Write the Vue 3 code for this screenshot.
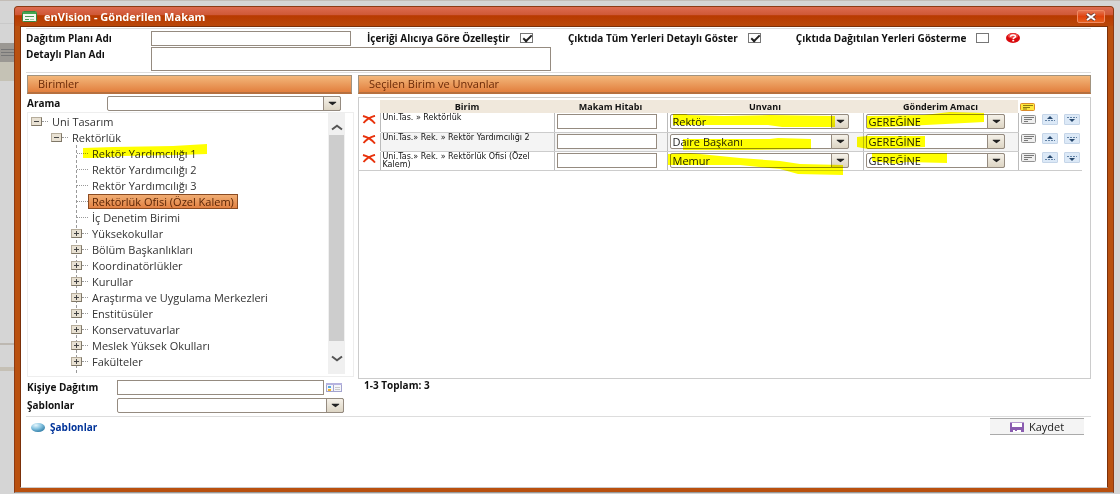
<script setup>
import { ref } from 'vue'

const planName = ref('')
const planDetail = ref('')
const person = ref('')
const options = ref([
  { id: 'customize', label: 'İçeriği Alıcıya Göre Özelleştir', checked: true },
  { id: 'detailed', label: 'Çıktıda Tüm Yerleri Detaylı Göster', checked: true },
  { id: 'hidden', label: 'Çıktıda Dağıtılan Yerleri Gösterme', checked: false },
])

const tree = [
  { label: 'Uni Tasarım', level: 0, sign: '-' },
  { label: 'Rektörlük', level: 1, sign: '-' },
  { label: 'Rektör Yardımcılığı 1', level: 2, mark: '0,4 30,3 90,2 124,0 124,10 95,11 40,12 10,14 0,14' },
  { label: 'Rektör Yardımcılığı 2', level: 2 },
  { label: 'Rektör Yardımcılığı 3', level: 2 },
  { label: 'Rektörlük Ofisi (Özel Kalem)', level: 2, selected: true },
  { label: 'İç Denetim Birimi', level: 2 },
  { label: 'Yüksekokullar', level: 2, sign: '+' },
  { label: 'Bölüm Başkanlıkları', level: 2, sign: '+' },
  { label: 'Koordinatörlükler', level: 2, sign: '+' },
  { label: 'Kurullar', level: 2, sign: '+' },
  { label: 'Araştırma ve Uygulama Merkezleri', level: 2, sign: '+' },
  { label: 'Enstitüsüler', level: 2, sign: '+' },
  { label: 'Konservatuvarlar', level: 2, sign: '+' },
  { label: 'Meslek Yüksek Okulları', level: 2, sign: '+' },
  { label: 'Fakülteler', level: 2, sign: '+' },
]

const rows = ref([
  {
    unit: 'Uni.Tas. » Rektörlük', address: '', title: 'Rektör', purpose: 'GEREĞİNE',
    titleMark: '3,0 16,0 18,1 54,2 100,1 165,2 165,13 112,13 98,11 3,11',
    purposeMark: '1,2 58,1 84,-2 118,-1 118,8 60,11 1,14',
  },
  {
    unit: 'Uni.Tas.» Rek. » Rektör Yardımcılığı 2', address: '', title: 'Daire Başkanı', purpose: 'GEREĞİNE',
    titleMark: '13,5 100,5 108,4 141,5 141,15 70,16 13,16',
    purposeMark: '-9,3 1,2 59,2 59,13 2,15 -9,13',
  },
  {
    unit: 'Uni.Tas.» Rek. » Rektörlük Ofisi (Özel Kalem)', address: '', title: 'Memur', purpose: 'GEREĞİNE',
    titleMark: '-2,1 20,0 70,5 110,8 130,11 173,12 173,22 128,21 110,16 70,12 -2,12',
    purposeMark: '6,0 81,0 81,10 40,9 30,11 6,8',
  },
])
</script>

<template>
  <div class="page">
    <div class="backdrop" aria-hidden="true"></div>
    <section class="window" aria-labelledby="window-title">
      <header class="titlebar">
        <svg class="app-icon" width="15" height="11" viewBox="0 0 15 11">
          <rect x=".5" y=".5" width="14" height="10" rx="1" fill="#f4f8f0" stroke="#36893f" />
          <path d="M1 1h13v2H1z" fill="#45a64f" />
          <path d="M3 5.500h9M3 8.500h4" stroke="#4a9b56" />
          <path d="M8 8.500h4" stroke="#a9c9a5" />
        </svg>
        <h1 id="window-title">enVision - Gönderilen Makam</h1>
        <button class="close" type="button" aria-label="Kapat">
          <svg width="12" height="8" viewBox="0 0 12 8">
            <path d="M2 1l8 6M10 1L2 7" stroke="#6c3b31" stroke-width="3.600" />
            <path d="M2 1l8 6M10 1L2 7" stroke="#fff" stroke-width="2" />
          </svg>
        </button>
      </header>

      <main class="content">
        <div class="plan">
          <label for="plan-name">Dağıtım Planı Adı</label>
          <div class="plan-line">
            <input id="plan-name" v-model="planName" class="box plan-name" type="text">
            <div class="options">
              <label v-for="o in options" :key="o.id" :for="o.id" class="option">
                {{ o.label }}
                <input :id="o.id" v-model="o.checked" type="checkbox">
              </label>
              <button class="bare" type="button" aria-label="Yardım">
                <svg width="14" height="10" viewBox="0 0 14 10">
                  <ellipse cx="7" cy="5" rx="7" ry="5" fill="#d9090d" />
                  <ellipse cx="7" cy="3" rx="5" ry="2.400" fill="#f0504c" />
                  <path d="M4.500 3.700C4.600 1.300 9.600 1.400 9.500 3.500 9.400 4.800 7.200 4.700 7.200 6.300" fill="none" stroke="#fff" stroke-width="1.500" />
                  <path d="M6.300 7h1.900v1.400H6.300z" fill="#fff" />
                </svg>
              </button>
            </div>
          </div>
          <label for="plan-detail">Detaylı Plan Adı</label>
          <textarea id="plan-detail" v-model="planDetail" class="box plan-detail"></textarea>
        </div>

        <div class="columns">
          <section class="units">
            <h2>Birimler</h2>
            <div class="field search">
              <label for="search">Arama</label>
              <span class="combo">
                <select id="search"><option></option></select>
                <svg class="arrow" viewBox="0 0 17 14"><path d="M5 5h8v1L9 9 5 6z" /></svg>
              </span>
            </div>
            <div class="tree-box">
              <ul class="tree">
                <li v-for="n in tree" :key="n.label" :class="['level-' + n.level, { leaf: !n.sign }]">
                  <button v-if="n.sign" class="toggle" type="button" :aria-label="n.label">
                    <svg width="9" height="7" viewBox="0 0 9 7">
                      <path d="M2 3.500h5" stroke="#444" />
                      <path v-if="n.sign === '+'" d="M4.500 1v5" stroke="#444" />
                    </svg>
                  </button>
                  <span class="dots"></span>
                  <span :class="['node', { selected: n.selected }]">{{ n.label }}
                    <svg v-if="n.mark" class="mark"><polygon :points="n.mark" /></svg>
                  </span>
                </li>
              </ul>
              <div class="scrollbar" aria-hidden="true">
                <svg width="12" height="8" viewBox="0 0 12 8"><path d="M1 6.500l5-3.700 5 3.700" /></svg>
                <span class="thumb"></span>
                <svg width="12" height="8" viewBox="0 0 12 8"><path d="M1 1.500l5 3.700 5-3.700" /></svg>
              </div>
            </div>
            <div class="field person">
              <label for="person">Kişiye Dağıtım</label>
              <input id="person" v-model="person" class="box" type="text">
              <button class="bare" type="button" aria-label="Kişi seç">
                <svg width="16" height="9" viewBox="0 0 16 9">
                  <rect x=".5" y=".5" width="15" height="8" fill="#f4f5fa" stroke="#a3a3ce" />
                  <path d="M0 0h16v2H0z" fill="#b6b3df" />
                  <path d="M7.500 2v7" stroke="#a3a3ce" />
                  <path d="M2 3h3v2H2z" fill="#5ba7dc" />
                  <path d="M2 6h3v2H2z" fill="#f0b429" />
                  <path d="M9 4.500h5M9 6.500h5" stroke="#c9c9c9" />
                </svg>
              </button>
            </div>
            <div class="field template">
              <label for="template">Şablonlar</label>
              <span class="combo">
                <select id="template"><option></option></select>
                <svg class="arrow" viewBox="0 0 17 14"><path d="M5 5h8v1L9 9 5 6z" /></svg>
              </span>
            </div>
          </section>

          <section class="chosen">
            <h2>Seçilen Birim ve Unvanlar</h2>
            <div class="grid-box">
              <table>
                <colgroup>
                  <col class="c-delete"><col><col class="c-address"><col class="c-title"><col class="c-purpose"><col class="c-tools">
                </colgroup>
                <thead>
                  <tr>
                    <td></td>
                    <th scope="col">Birim</th>
                    <th scope="col">Makam Hitabı</th>
                    <th scope="col">Unvanı</th>
                    <th scope="col">Gönderim Amacı</th>
                    <td class="tools">
                      <button class="bare" type="button" aria-label="Tüm notlar">
                        <svg width="15" height="8" viewBox="0 0 15 8">
                          <rect x=".5" y=".5" width="14" height="7" rx="1" fill="#ffe83c" stroke="#dc8b2a" />
                          <path d="M3 2.500h10M3 4.500h7M3 6h4" stroke="#8d7a12" />
                        </svg>
                      </button>
                    </td>
                  </tr>
                </thead>
                <tbody>
                  <tr v-for="(r, i) in rows" :key="r.unit">
                    <td class="delete">
                      <button class="bare" type="button" aria-label="Sil">
                        <svg width="14" height="9" viewBox="0 0 14 9">
                          <path d="M1 1C5 2 10 5 13 8.500M13 .8C8 2 4 5 1.500 8" fill="none" stroke="#e8320c" stroke-width="1.900" />
                        </svg>
                      </button>
                    </td>
                    <td class="unit">{{ r.unit }}</td>
                    <td class="entry"><input v-model="r.address" class="box" type="text" :aria-label="'Makam Hitabı ' + (i + 1)"></td>
                    <td class="entry">
                      <span class="combo">
                        <select v-model="r.title" :aria-label="'Unvanı ' + (i + 1)"><option>{{ r.title }}</option></select>
                        <svg class="arrow" viewBox="0 0 17 14"><path d="M5 5h8v1L9 9 5 6z" /></svg>
                        <svg class="mark"><polygon :points="r.titleMark" /></svg>
                      </span>
                    </td>
                    <td class="entry">
                      <span class="combo">
                        <select v-model="r.purpose" :aria-label="'Gönderim Amacı ' + (i + 1)"><option>{{ r.purpose }}</option></select>
                        <svg class="arrow" viewBox="0 0 17 14"><path d="M5 5h8v1L9 9 5 6z" /></svg>
                        <svg class="mark"><polygon :points="r.purposeMark" /></svg>
                      </span>
                    </td>
                    <td class="tools">
                      <div class="tool-row">
                        <button class="bare" type="button" aria-label="Not">
                          <svg width="15" height="9" viewBox="0 0 15 9">
                            <rect x=".5" y=".5" width="14" height="8" rx="1" fill="#eee" stroke="#929292" />
                            <path d="M3 2.500h10M3 4.500h8M3 6.500h4" stroke="#777" />
                          </svg>
                        </button>
                        <button class="move" type="button" aria-label="Yukarı">
                          <svg width="12" height="6" viewBox="0 0 12 6"><path d="M3 3l3-3 3 3z" fill="#27496f" /><path d="M1 4.500h10" stroke="#6484a7" stroke-dasharray="2 1" /></svg>
                        </button>
                        <button class="move" type="button" aria-label="Aşağı">
                          <svg width="12" height="6" viewBox="0 0 12 6"><path d="M3 3l3 3 3-3z" fill="#27496f" /><path d="M1 1.500h10" stroke="#6484a7" stroke-dasharray="2 1" /></svg>
                        </button>
                      </div>
                    </td>
                  </tr>
                </tbody>
              </table>
            </div>
            <p class="total">1-3 Toplam: 3</p>
          </section>
        </div>

        <footer class="actions">
          <a href="#">
            <svg width="14" height="9" viewBox="0 0 14 9">
              <defs>
                <radialGradient id="ball" cx=".35" cy=".25" r=".8">
                  <stop offset="0" stop-color="#e6f6fc" />
                  <stop offset=".5" stop-color="#86c3e0" />
                  <stop offset="1" stop-color="#2d7ba6" />
                </radialGradient>
              </defs>
              <ellipse cx="7" cy="4.500" rx="7" ry="4.500" fill="url(#ball)" />
            </svg>
            Şablonlar
          </a>
          <button class="save" type="button">
            <svg width="14" height="10" viewBox="0 0 14 10">
              <path d="M0 0h14v10H0z" fill="#8a5bb0" />
              <path d="M2 1h10v4H2z" fill="#fff" />
              <path d="M0 0h14v1H0z" fill="#b79bd0" />
              <path d="M3 8h8v2H3z" fill="#fff" />
              <path d="M5 8h2v1H5z" fill="#8a5bb0" />
            </svg>
            Kaydet
          </button>
        </footer>
      </main>
    </section>
  </div>
</template>

<style>
body {
  background: #d5d5d5;
}
</style>

<style scoped>
* {
  box-sizing: border-box;
}

.page {
  position: relative;
  display: flex;
  min-height: 100vh;
  padding: 5px 6px 1px 14px;
  border-top: 1px solid #c3bdb7;
  background: #d5d5d5;
  color: #111;
  font: 11px/16px "Open Sans", "Noto Sans", sans-serif;
}

.backdrop {
  position: absolute;
  top: 0;
  left: 0;
  width: 14px;
  height: 100%;
  background:
    linear-gradient(#777, #777) 1px 48px / 13px 1px no-repeat,
    linear-gradient(#777, #777) 1px 51px / 13px 1px no-repeat,
    linear-gradient(#777, #777) 1px 54px / 13px 1px no-repeat,
    linear-gradient(transparent 22px, #c9c9c9 22px 23px, transparent 23px 42px, #9b9893 42px 61px, #c5c2b5 61px 80px, transparent 80px 279px, transparent 342px, #bdb8b1 342px 344px, transparent 344px 366px, #c5c0b5 366px 370px, transparent 370px);
}

.window {
  position: relative;
  display: flex;
  flex: 1;
  flex-direction: column;
  min-width: 0;
  padding: 0 5px 4px;
  border: 1px solid #8c3a13;
  border-bottom-color: #999;
  border-radius: 4px 4px 0 0;
  background: #b9500f;
}

.titlebar {
  display: flex;
  align-items: center;
  height: 19px;
  margin: 0 -5px;
  padding: 0 8px 0 7px;
  border-radius: 3px 3px 0 0;
  background: linear-gradient(#dd6b50, #cf5837 40%, #b83a00 46%, #ba480a);
}

.titlebar h1 {
  flex: 1;
  margin: 0 0 0 7px;
  color: #fff;
  font-size: 11px;
  line-height: 16px;
}

.close {
  display: flex;
  align-items: center;
  justify-content: center;
  width: 28px;
  height: 13px;
  padding: 0;
  border: 1px solid #f08a62;
  border-radius: 2px;
  background: linear-gradient(#e47452, #e0420c 50%, #e8601e);
}

.content {
  flex: 1;
  padding: 1px 16px 0 5px;
  border: 1px solid #7b3009;
  border-bottom-color: #ccc;
  background: #fff;
}

.plan {
  display: grid;
  grid-template-columns: 125px 1fr;
  padding: 2px 0 1px;
  border: solid #ddd;
  border-width: 1px 0;
}

label {
  font-size: 10px;
  font-weight: 700;
  line-height: 14px;
  white-space: nowrap;
}

.plan-line {
  display: flex;
  height: 16px;
}

.box {
  display: block;
  height: 15px;
  margin: 0;
  padding: 0 3px;
  border: 1px solid #958b80;
  border-radius: 0;
  outline: 0;
  background: #fff;
  font: inherit;
}

.plan-name {
  width: 200px;
}

.plan-detail {
  width: 400px;
  height: 24px;
  resize: none;
}

.options {
  display: flex;
  align-items: center;
  height: 14px;
  margin-left: 16px;
}

.option {
  display: flex;
  align-items: center;
  gap: 10px;
  margin-right: 35px;
}

.option:nth-child(3) {
  margin-right: 17px;
}

.option input {
  position: relative;
  width: 13px;
  height: 10px;
  margin: 0;
  border: 1px solid #777;
  appearance: none;
  background: #fff;
}

.option input:checked::after {
  position: absolute;
  top: -1px;
  left: 4px;
  width: 3px;
  height: 7px;
  border: solid #222;
  border-width: 0 2px 2px 0;
  content: "";
  rotate: 45deg;
}

.bare {
  display: block;
  padding: 0;
  border: 0;
  background: none;
}

svg {
  display: block;
  flex: none;
}

.columns {
  display: grid;
  grid-template-columns: 327px minmax(0, 1fr);
  gap: 4px;
  padding: 2px 0 0 1px;
}

h2 {
  height: 19px;
  margin: 0;
  padding: 0 10px;
  border: 1px solid #a1937f;
  border-bottom: 2px solid #b6703f;
  background: linear-gradient(#f3b77b, #e27f3e);
  color: #6b2a08;
  font-size: 11px;
  font-weight: 400;
  line-height: 16px;
}

.units h2 {
  margin-right: 2px;
}

.field {
  display: flex;
  align-items: center;
  height: 18px;
}

.search label {
  width: 80px;
}

.search .combo {
  width: 234px;
}

.combo {
  position: relative;
  display: block;
  height: 15px;
}

.combo select {
  display: block;
  width: 100%;
  height: 15px;
  padding: 0 20px 0 2px;
  border: 1px solid #958b80;
  border-radius: 2px;
  outline: 0;
  appearance: none;
  background: #fff;
  color: #222;
  font: inherit;
  line-height: 13px;
}

.arrow {
  position: absolute;
  top: 0;
  right: 0;
  width: 18px;
  height: 15px;
  border: 1px solid #958b80;
  border-radius: 0 2px 2px 0;
  background: linear-gradient(#f5f1e9, #ddd5c4);
  fill: #222;
  pointer-events: none;
}

.mark {
  position: absolute;
  top: 0;
  left: 0;
  width: 1px;
  height: 1px;
  overflow: visible;
  fill: #ff0;
  mix-blend-mode: multiply;
  pointer-events: none;
}

.tree-box {
  display: flex;
  height: 265px;
  border: 1px solid #eee;
}

.tree {
  position: relative;
  flex: 1;
  height: 260px;
  margin: 0;
  padding: 0;
  list-style: none;
}

.tree::before {
  position: absolute;
  top: 32px;
  bottom: 0;
  left: 48px;
  border-left: 1px dashed #999;
  content: "";
}

.tree li {
  position: relative;
  display: flex;
  align-items: center;
  height: 16px;
}

.level-0 {
  padding-left: 3px;
}

.level-1 {
  padding-left: 23px;
}

.level-2 {
  padding-left: 43px;
}

.level-2.leaf {
  padding-left: 49px;
}

.toggle {
  padding: 0;
  border: 1px solid #7f7767;
  border-top-color: #b5ac9b;
  border-left-color: #b5ac9b;
  background: #e8e1d3;
}

.dots {
  width: 6px;
  border-top: 1px dotted #999;
}

.leaf .dots {
  width: 11px;
}

.node {
  position: relative;
  padding: 0 3px;
  border: 1px solid transparent;
  color: #333;
  line-height: 13px;
  white-space: nowrap;
}

.node .mark {
  top: -3px;
  left: -6px;
}

.selected {
  border-color: #8b4b22;
  background: linear-gradient(#f0ad73, #e28143);
  color: #5b2506;
}

.scrollbar {
  display: flex;
  flex-direction: column;
  align-items: center;
  width: 17px;
  height: 261px;
  margin-right: 8px;
  padding: 10px 0 11px;
  background: #f0f0f0;
  fill: none;
  stroke: #555;
  stroke-width: 2;
}

.thumb {
  flex: 1;
  width: 15px;
  margin: 4px 0 14px;
  background: #cdcdcd;
}

.person {
  height: 20px;
}

.person label,
.template label {
  width: 90px;
}

.person .box {
  width: 207px;
}

.person .bare {
  margin-left: 2px;
}

.template {
  height: 16px;
}

.template .combo {
  width: 227px;
}

.grid-box {
  height: 282px;
  margin-top: 3px;
  padding: 2px 8px 0 0;
  border: 1px solid #ccc;
}

table {
  width: 100%;
  border-collapse: collapse;
  table-layout: fixed;
}

.c-delete {
  width: 21px;
}

.c-address {
  width: 113px;
}

.c-title {
  width: 196px;
}

.c-purpose {
  width: 155px;
}

.c-tools {
  width: 64px;
}

th,
td {
  padding: 0;
}

th {
  height: 13px;
  background: #f0e8dc;
  font-size: 9px;
  line-height: 13px;
}

tbody tr {
  height: 19px;
}

tbody td {
  height: 19px;
  border-bottom: 1px solid #ccc;
  vertical-align: top;
}

tbody td.delete {
  padding: 2px 0 0 3px;
  border-color: #fff;
}

tbody tr:last-child td.delete {
  border-color: #ccc;
}

tbody .unit,
tbody .entry {
  border-left: 1px solid #bbb;
}

tbody .entry:nth-child(5) {
  border-right: 1px solid #bbb;
}

tbody tr:nth-child(2) .unit,
tbody tr:nth-child(2) .entry {
  background: #f4f4f4;
}

.unit {
  padding: 1px 16px 0 2px;
  font: 8px/8px "DejaVu Sans", "Noto Sans", sans-serif;
}

.entry {
  padding: 1px 0 0 2px;
}

.entry .box {
  width: 100px;
}

.entry:nth-child(4) .combo {
  width: 179px;
}

.entry:nth-child(5) .combo {
  width: 139px;
}

.tools {
  padding-left: 2px;
}

tbody tr:not(:last-child) .tools {
  border-bottom-color: #fff;
}

.tool-row {
  display: flex;
  align-items: center;
  gap: 6px;
  height: 12px;
}

.move {
  display: flex;
  align-items: center;
  justify-content: center;
  width: 16px;
  height: 11px;
  padding: 0;
  border: 1px solid #c5d5e8;
  border-radius: 1px;
  background: #dce9f7;
}

.total {
  margin: 0 0 0 6px;
  font-size: 10px;
  font-weight: 700;
  line-height: 12px;
}

.actions {
  display: flex;
  justify-content: space-between;
  margin-top: 3px;
  padding: 1px 7px 0 5px;
  border-top: 1px solid #ddd;
}

.actions a {
  display: flex;
  align-items: center;
  gap: 5px;
  height: 18px;
  color: #003399;
  font-size: 10px;
  font-weight: 700;
  text-decoration: none;
}

.save {
  display: flex;
  align-items: center;
  justify-content: center;
  gap: 5px;
  width: 94px;
  height: 17px;
  padding: 0;
  border: 0 solid #aaa;
  border-width: 1px 0;
  background: #f4f4f4;
  color: #222;
  font: inherit;
}
</style>
